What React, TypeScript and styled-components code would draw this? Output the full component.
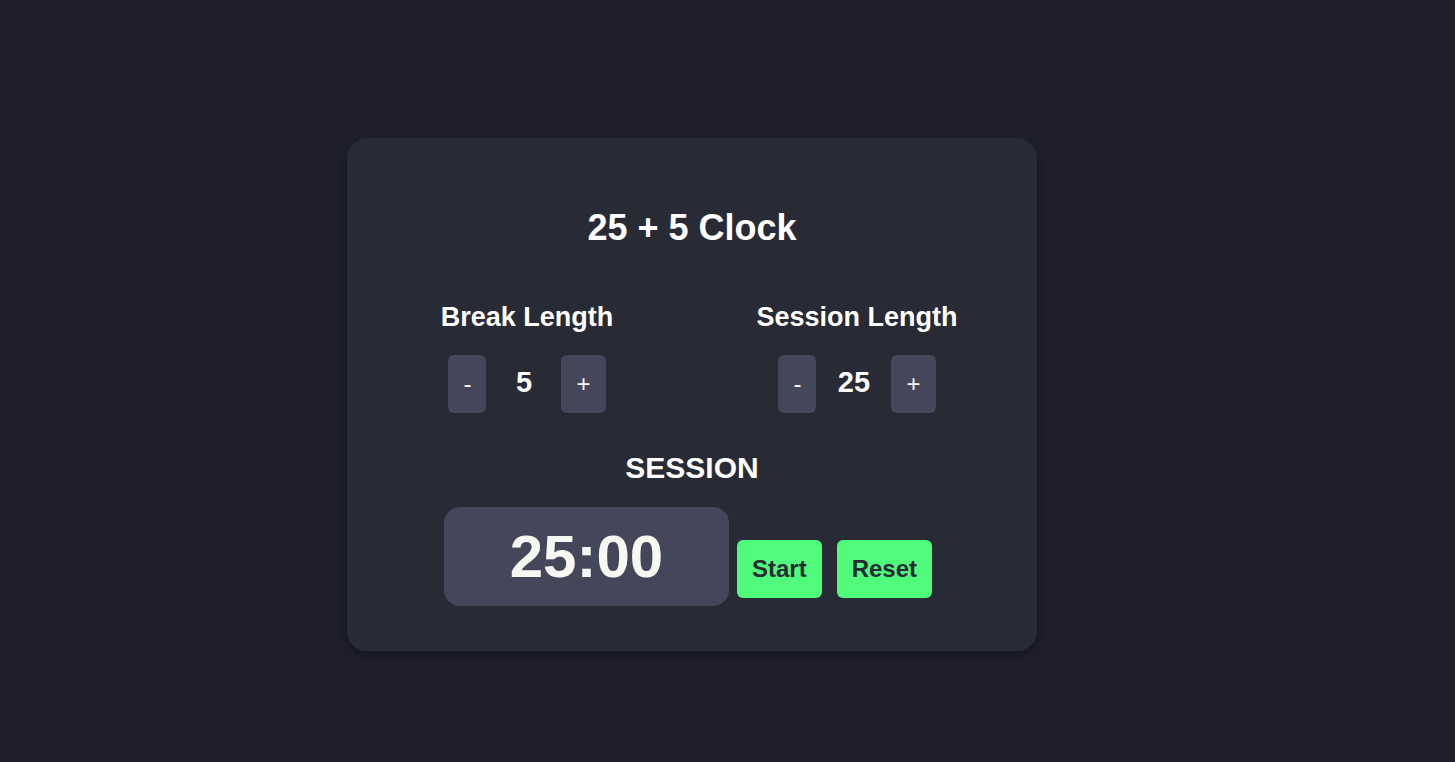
import React, { useState } from "react";
import styled, { createGlobalStyle } from "styled-components";

const GlobalStyle = createGlobalStyle`
  html, body {
    margin: 0;
    padding: 0;
    background: #1f1f2e;
    font-family: "Liberation Sans", Arial, sans-serif;
  }
  * { box-sizing: border-box; }
`;

const Page = styled.div`
  width: 100%;
  min-height: 762px;
  display: flex;
  justify-content: center;
  align-items: flex-start;
  padding: 138px 71px 0 0;
`;

const Card = styled.div`
  width: 690px;
  height: 513px;
  background: #282a36;
  border-radius: 20px;
  box-shadow: 0 4px 16px rgba(0, 0, 0, 0.3);
  padding: 69px 15px 0;
  display: flex;
  flex-direction: column;
  align-items: center;
  color: #f8f8f2;
`;

const Title = styled.h1`
  margin: 0;
  font-size: 36px;
  font-weight: 700;
  line-height: 41px;
  color: #ffffff;
`;

const Settings = styled.div`
  margin-top: 54px;
  width: 660px;
  display: grid;
  grid-template-columns: 1fr 1fr;
`;

const Column = styled.div`
  display: flex;
  flex-direction: column;
  align-items: center;
`;

const Label = styled.h2`
  margin: 0;
  font-size: 27px;
  font-weight: 700;
  line-height: 31px;
  color: #ffffff;
`;

const Controls = styled.div`
  margin-top: 22px;
  display: flex;
  align-items: center;
`;

const SmallButton = styled.button`
  border: none;
  border-radius: 6px;
  background: #44475a;
  color: #f8f8f2;
  font-family: "Liberation Sans", Arial, sans-serif;
  font-size: 24px;
  font-weight: 400;
  line-height: 28px;
  padding: 15px;
  cursor: pointer;
`;

const Value = styled.span`
  width: 75px;
  padding-bottom: 4px;
  text-align: center;
  font-size: 29px;
  line-height: 33px;
  font-weight: 700;
  color: #ffffff;
`;

const Mode = styled.h2`
  margin: 38px 0 0;
  font-size: 30px;
  font-weight: 700;
  line-height: 34px;
  color: #ffffff;
`;

const TimerRow = styled.div`
  margin-top: 22px;
  display: flex;
  align-items: baseline;
  margin-left: -8px;
`;

const TimerBox = styled.div`
  width: 285px;
  height: 99px;
  padding-top: 20px;
  border-radius: 16px;
  background: #44475a;
  text-align: center;
  font-size: 60px;
  line-height: 60px;
  font-weight: 700;
  color: #f8f8f2;
`;

const ActionButton = styled.button<{ $gap: number }>`
  margin-left: ${(p) => p.$gap}px;
  border: none;
  border-radius: 6px;
  background: #50fa7b;
  color: #282a36;
  font-family: "Liberation Sans", Arial, sans-serif;
  font-size: 24px;
  font-weight: 700;
  line-height: 28px;
  padding: 15px;
  cursor: pointer;
`;

export default function App() {
  const [brk, setBrk] = useState(5);
  const [session, setSession] = useState(25);
  const mm = String(session).padStart(2, "0");

  return (
    <>
      <GlobalStyle />
      <Page>
        <Card>
          <Title>25 + 5 Clock</Title>
          <Settings>
            <Column>
              <Label>Break Length</Label>
              <Controls>
                <SmallButton onClick={() => setBrk(Math.max(1, brk - 1))}>-</SmallButton>
                <Value>{brk}</Value>
                <SmallButton onClick={() => setBrk(Math.min(60, brk + 1))}>+</SmallButton>
              </Controls>
            </Column>
            <Column>
              <Label>Session Length</Label>
              <Controls>
                <SmallButton onClick={() => setSession(Math.max(1, session - 1))}>-</SmallButton>
                <Value>{session}</Value>
                <SmallButton onClick={() => setSession(Math.min(60, session + 1))}>+</SmallButton>
              </Controls>
            </Column>
          </Settings>
          <Mode>SESSION</Mode>
          <TimerRow>
            <TimerBox>{mm}:00</TimerBox>
            <ActionButton $gap={8}>Start</ActionButton>
            <ActionButton $gap={15}>Reset</ActionButton>
          </TimerRow>
        </Card>
      </Page>
    </>
  );
}
